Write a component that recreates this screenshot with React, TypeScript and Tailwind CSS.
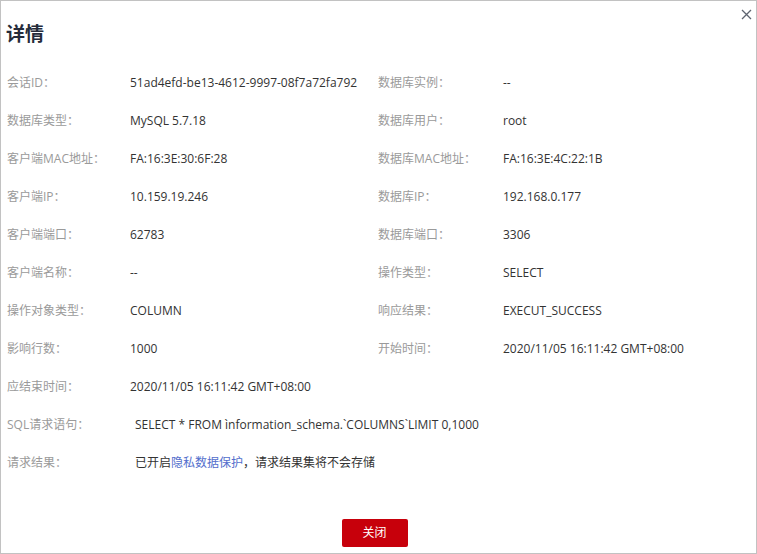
import React from "react";

const rows: [string, string, string?, string?][] = [
  ["会话ID：", "51ad4efd-be13-4612-9997-08f7a72fa792", "数据库实例：", "--"],
  ["数据库类型：", "MySQL 5.7.18", "数据库用户：", "root"],
  ["客户端MAC地址：", "FA:16:3E:30:6F:28", "数据库MAC地址：", "FA:16:3E:4C:22:1B"],
  ["客户端IP：", "10.159.19.246", "数据库IP：", "192.168.0.177"],
  ["客户端端口：", "62783", "数据库端口：", "3306"],
  ["客户端名称：", "--", "操作类型：", "SELECT"],
  ["操作对象类型：", "COLUMN", "响应结果：", "EXECUT_SUCCESS"],
  ["影响行数：", "1000", "开始时间：", "2020/11/05 16:11:42 GMT+08:00"],
  ["应结束时间：", "2020/11/05 16:11:42 GMT+08:00"],
];

export default function App() {
  return (
    <div
      className="relative w-[757px] h-[554px] bg-white border border-[#c2c2c2] text-[12px] overflow-hidden"
      style={{ fontFamily: '"Open Sans", "Noto Sans CJK SC", sans-serif' }}
    >
      <button className="absolute right-[3px] top-[6px] w-[14px] h-[14px] flex items-center justify-center text-[#575d6c]">
        <svg width="11" height="11" viewBox="0 0 11 11">
          <path d="M1 1 L10 10 M10 1 L1 10" stroke="#5e6470" strokeWidth="1.3" />
        </svg>
      </button>
      <div className="pl-[5px] pt-[19px] text-[19px] font-bold text-[#252b3a] leading-[28px]">
        详情
      </div>
      <div className="mt-[16px] pl-[6px] flex flex-col">
        {rows.map((r, i) => (
          <div key={i} className="flex h-[38px] items-center">
            <div className="w-[123px] text-[#9a9a9a]">{r[0]}</div>
            <div className="w-[248px] text-[#333]">{r[1]}</div>
            {r[2] && (
              <>
                <div className="w-[125px] text-[#9a9a9a]">{r[2]}</div>
                <div className="text-[#333]">{r[3]}</div>
              </>
            )}
          </div>
        ))}
        <div className="flex h-[38px] items-center">
          <div className="w-[128px] text-[#9a9a9a]">SQL请求语句：</div>
          <div className="text-[#333]">SELECT * FROM ìnformation_schema.`COLUMNS`LIMIT 0,1000</div>
        </div>
        <div className="flex h-[38px] items-center">
          <div className="w-[128px] text-[#9a9a9a]">请求结果：</div>
          <div className="text-[#333]">
            已开启<span className="text-[#526ecc]">隐私数据保护</span>，请求结果集将不会存储
          </div>
        </div>
      </div>
      <div className="absolute left-0 right-0 top-[518px] flex justify-center">
        <button className="ml-[-8px] w-[66px] h-[28px] rounded-[2px] bg-[#c7000b] text-white text-[12px]">
          关闭
        </button>
      </div>
    </div>
  );
}
